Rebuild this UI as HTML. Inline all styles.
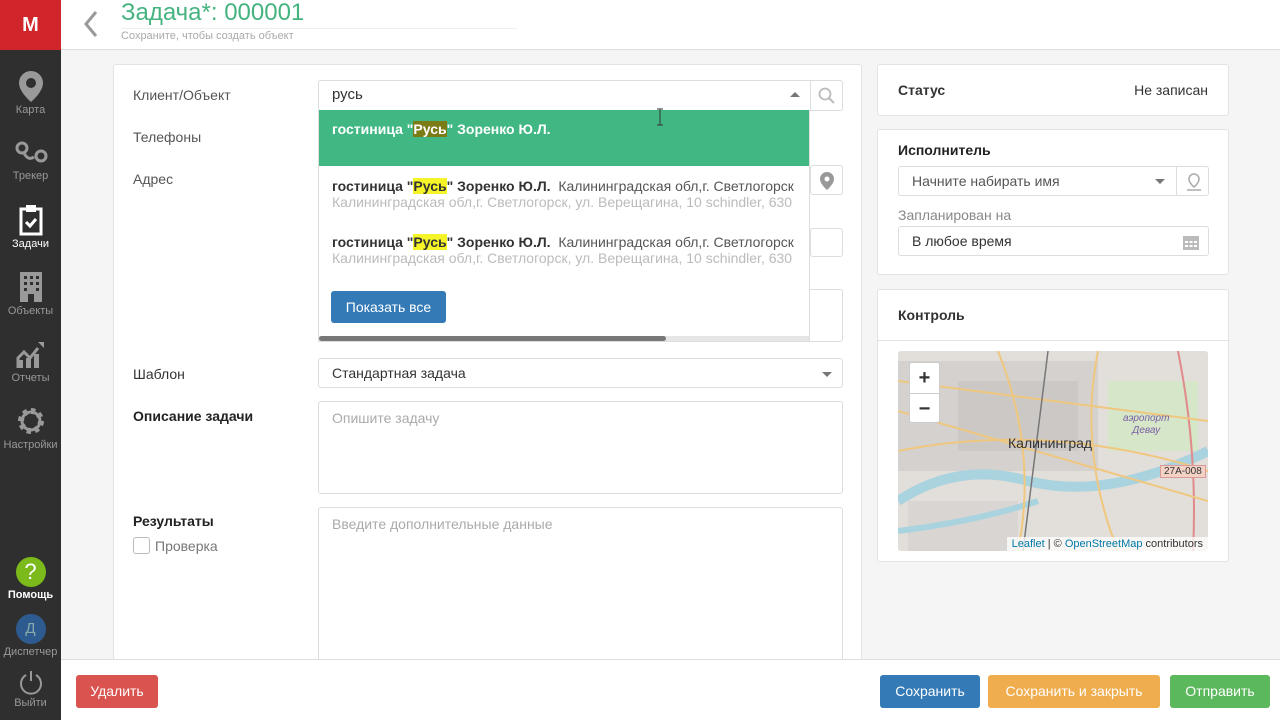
<!DOCTYPE html>
<html><head><meta charset="utf-8"><style>
*{box-sizing:border-box;margin:0;padding:0}
body{width:1280px;height:720px;overflow:hidden;background:#f5f5f5;font-family:"Liberation Sans","Noto Sans CJK SC",sans-serif;font-size:14px;color:#333;position:relative}
.side{position:absolute;left:0;top:0;width:61px;height:720px;background:#2f2f2f}
.logo{height:50px;background:#d0252b;color:#fff;font-weight:bold;font-size:20px;text-align:center;line-height:50px}
.ni{position:absolute;left:0;width:61px;text-align:center;color:#999;font-size:11px}
.ni svg{display:block;margin:0 auto 2px}
.top{position:absolute;left:61px;top:0;right:0;height:50px;background:#fff;border-bottom:1px solid #ddd}
.abs{position:absolute}
.card{position:absolute;background:#fff;border:1px solid #e3e3e3;border-radius:3px}
.inp{position:absolute;background:#fff;border:1px solid #ddd;border-radius:3px}
.lbl{position:absolute;left:133px;font-size:14px;color:#555}
.ph{color:#aaa}
.btn{position:absolute;color:#fff;border-radius:3px;font-size:14px;text-align:center;line-height:32px;height:32px}
.hl{background:#f4f428;color:#333}
</style></head><body>
<div class="side">
<div class="logo">M</div>
<div class="ni" style="top:70px"><svg width="26" height="32" viewBox="0 0 26 32"><path d="M13 1a12 12 0 0 0-12 12c0 9 12 19 12 19s12-10 12-19A12 12 0 0 0 13 1z" fill="#999"/><circle cx="13" cy="13" r="5" fill="#2f2f2f"/></svg>Карта</div>
<div class="ni" style="top:140px"><svg width="34" height="28" viewBox="0 0 34 28"><circle cx="8" cy="8" r="5" fill="none" stroke="#999" stroke-width="3"/><circle cx="27" cy="16" r="5" fill="none" stroke="#999" stroke-width="3"/><path d="M10 13q4 8 10 4" stroke="#999" stroke-width="3" fill="none"/></svg>Трекер</div>
<div class="ni" style="top:204px;color:#fff"><svg width="24" height="32" viewBox="0 0 24 32"><rect x="2" y="5" width="20" height="25" fill="none" stroke="#fff" stroke-width="3"/><rect x="7" y="1" width="10" height="7" fill="#fff"/><path d="M7 18l4 4 6-7" stroke="#fff" stroke-width="3" fill="none"/></svg>Задачи</div>
<div class="ni" style="top:271px"><svg width="24" height="32" viewBox="0 0 24 32"><rect x="1" y="1" width="22" height="30" fill="#999"/><g fill="#2f2f2f"><rect x="5" y="5" width="3" height="3"/><rect x="11" y="5" width="3" height="3"/><rect x="17" y="5" width="3" height="3"/><rect x="5" y="11" width="3" height="3"/><rect x="11" y="11" width="3" height="3"/><rect x="17" y="11" width="3" height="3"/><rect x="5" y="17" width="3" height="3"/><rect x="17" y="17" width="3" height="3"/><rect x="9" y="23" width="6" height="8"/></g></svg>Объекты</div>
<div class="ni" style="top:338px"><svg width="30" height="32" viewBox="0 0 30 32"><path d="M2 30V20l6-6 6 6 8-10" stroke="#999" stroke-width="3" fill="none"/><path d="M22 4h6v6z" fill="#999"/><rect x="2" y="22" width="5" height="8" fill="#999"/><rect x="10" y="20" width="5" height="10" fill="#999"/><rect x="18" y="16" width="5" height="14" fill="#999"/></svg>Отчеты</div>
<div class="ni" style="top:405px"><svg width="30" height="32" viewBox="0 0 30 32"><circle cx="15" cy="16" r="10" fill="none" stroke="#999" stroke-width="6" stroke-dasharray="4 3.8"/><circle cx="15" cy="16" r="9" fill="none" stroke="#999" stroke-width="3"/></svg>Настройки</div>
<div class="ni" style="top:557px;color:#fff;font-weight:bold"><div style="width:30px;height:30px;border-radius:50%;background:#7cba1c;margin:0 auto 2px;color:#fff;font-size:22px;line-height:30px;font-weight:normal">?</div>Помощь</div>
<div class="ni" style="top:614px"><div style="width:30px;height:30px;border-radius:50%;background:#2d5b8f;margin:0 auto 2px;color:#8aa;font-size:15px;line-height:30px">Д</div>Диспетчер</div>
<div class="ni" style="top:669px"><svg width="26" height="26" viewBox="0 0 26 26"><path d="M8 6a10 10 0 1 0 10 0" stroke="#999" stroke-width="2" fill="none"/><path d="M13 2v10" stroke="#999" stroke-width="2"/></svg>Выйти</div>
</div>
<div class="top">
<svg class="abs" style="left:22px;top:10px" width="16" height="28" viewBox="0 0 16 28"><path d="M13 2L3 14l10 12" stroke="#999" stroke-width="3" fill="none"/></svg>
<div class="abs" style="left:60px;top:-1px;font-size:24px;color:#45b37f">Задача*: 000001</div>
<div class="abs" style="left:60px;top:28px;width:396px;border-top:1px solid #eee"></div>
<div class="abs" style="left:60px;top:30px;font-size:11px;color:#aaa">Сохраните, чтобы создать объект</div>
</div>
<div class="card" style="left:113px;top:64px;width:749px;height:620px"></div>
<div class="lbl" style="top:87px">Клиент/Объект</div>
<div class="lbl" style="top:129px">Телефоны</div>
<div class="lbl" style="top:171px">Адрес</div>
<div class="lbl" style="top:366px;color:#333">Шаблон</div>
<div class="lbl" style="top:408px;font-weight:bold;color:#222">Описание задачи</div>
<div class="lbl" style="top:513px;font-weight:bold;color:#222">Результаты</div>
<div class="abs" style="left:133px;top:537px;width:17px;height:17px;border:1px solid #bbb;border-radius:3px;background:#fff"></div>
<div class="lbl" style="left:155px;top:538px;color:#777">Проверка</div>
<div class="inp" style="left:810px;top:165px;width:33px;height:30px"><svg class="abs" style="left:9px;top:6px" width="14" height="18" viewBox="0 0 14 18"><path d="M7 0a7 7 0 0 0-7 7c0 5 7 11 7 11s7-6 7-11A7 7 0 0 0 7 0z" fill="#999"/><circle cx="7" cy="7" r="2.5" fill="#fff"/></svg></div>
<div class="inp" style="left:810px;top:228px;width:33px;height:29px"></div>
<div class="inp" style="left:318px;top:289px;width:525px;height:53px"></div>
<div class="inp" style="left:318px;top:80px;width:525px;height:31px"></div>
<div class="abs" style="left:810px;top:80px;width:1px;height:31px;background:#ddd"></div>
<div class="abs" style="left:332px;top:86px;font-size:15px">русь</div>
<div class="abs" style="left:790px;top:92px;border:5px solid transparent;border-bottom:5px solid #777;border-top:0"></div>
<svg class="abs" style="left:818px;top:87px" width="18" height="18" viewBox="0 0 18 18"><circle cx="7" cy="7" r="5.5" stroke="#bbb" stroke-width="1.8" fill="none"/><path d="M11 11l5 5" stroke="#bbb" stroke-width="2"/></svg>
<div class="abs" style="left:318px;top:110px;width:492px;height:232px;background:#fff;border:1px solid #ddd;border-top:0;overflow:hidden;white-space:nowrap">
<div style="height:56px;background:#41b883;color:#fff;font-weight:bold;padding:11px 13px">гостиница "<span style="background:#7c7c17">Русь</span>" Зоренко Ю.Л.</div>
<div style="padding:12px 13px 0;height:56px;line-height:16px"><b>гостиница "<span class="hl">Русь</span>" Зоренко Ю.Л.</b>&nbsp; <span style="color:#555">Калининградская обл,г. Светлогорск</span><br><span style="color:#bbb">Калининградская обл,г. Светлогорск, ул. Верещагина, 10 schindler, 630</span></div>
<div style="padding:12px 13px 0;height:56px;line-height:16px"><b>гостиница "<span class="hl">Русь</span>" Зоренко Ю.Л.</b>&nbsp; <span style="color:#555">Калининградская обл,г. Светлогорск</span><br><span style="color:#bbb">Калининградская обл,г. Светлогорск, ул. Верещагина, 10 schindler, 630</span></div>
<div class="btn" style="left:12px;top:181px;width:115px;background:#337ab7;font-size:14px">Показать все</div>
<div class="abs" style="left:0;top:226px;width:492px;height:5px;background:#e6e6e6"></div>
<div class="abs" style="left:0;top:226px;width:347px;height:5px;background:#777;border-radius:3px"></div>
</div>
<svg class="abs" style="left:655px;top:108px" width="10" height="18"><path d="M2 1h6M5 1v16M2 17h6" stroke="#333"/></svg>
<div class="inp" style="left:318px;top:358px;width:525px;height:30px"><span class="abs" style="left:13px;top:6px">Стандартная задача</span><span class="abs" style="left:503px;top:13px;border:5px solid transparent;border-top:5px solid #777;border-bottom:0"></span></div>
<div class="inp" style="left:318px;top:401px;width:525px;height:93px"><span class="abs ph" style="left:13px;top:8px">Опишите задачу</span></div>
<div class="inp" style="left:318px;top:507px;width:525px;height:160px"><span class="abs ph" style="left:13px;top:8px">Введите дополнительные данные</span></div>

<div class="card" style="left:877px;top:64px;width:352px;height:52px"><span class="abs" style="left:20px;top:17px;font-weight:bold">Статус</span><span class="abs" style="right:20px;top:17px">Не записан</span></div>
<div class="card" style="left:877px;top:129px;width:352px;height:146px">
<span class="abs" style="left:20px;top:12px;font-weight:bold;color:#222">Исполнитель</span>
<div class="inp" style="left:20px;top:36px;width:311px;height:30px"><span class="abs" style="left:13px;top:6px;color:#555">Начните набирать имя</span><span class="abs" style="left:256px;top:12px;border:5px solid transparent;border-top:5px solid #777;border-bottom:0"></span><span class="abs" style="left:277px;top:0;width:1px;height:28px;background:#ddd"></span><svg class="abs" style="left:287px;top:6px" width="16" height="18" viewBox="0 0 16 18"><path d="M8 1a5 5 0 0 0-5 5c0 4 5 8 5 8s5-4 5-8a5 5 0 0 0-5-5z" fill="none" stroke="#aaa" stroke-width="1.5"/><path d="M1 17h14" stroke="#aaa" stroke-width="1.5"/></svg></div>
<span class="abs" style="left:20px;top:77px;color:#888">Запланирован на</span>
<div class="inp" style="left:20px;top:96px;width:311px;height:30px"><span class="abs" style="left:13px;top:6px">В любое время</span><svg class="abs" style="left:283px;top:6px" width="18" height="18" viewBox="0 0 18 18"><rect x="1" y="3" width="16" height="14" fill="#bbb"/><g fill="#fff"><rect x="3" y="8" width="3" height="2"/><rect x="7.5" y="8" width="3" height="2"/><rect x="12" y="8" width="3" height="2"/><rect x="3" y="12" width="3" height="2"/><rect x="7.5" y="12" width="3" height="2"/><rect x="12" y="12" width="3" height="2"/></g></svg></div>
</div>
<div class="card" style="left:877px;top:289px;width:352px;height:273px">
<span class="abs" style="left:20px;top:17px;font-weight:bold">Контроль</span>
<div class="abs" style="left:0;top:50px;width:350px;border-top:1px solid #e3e3e3"></div>
<div class="abs" style="left:20px;top:61px;width:310px;height:200px;background:#e8e4df;border-radius:3px;overflow:hidden">
<svg width="310" height="200" viewBox="0 0 310 200">
<rect width="310" height="200" fill="#e2ded9"/>
<rect x="0" y="10" width="200" height="110" fill="#d4d1ce"/>
<rect x="60" y="30" width="120" height="70" fill="#cbc8c6"/>
<rect x="10" y="150" width="110" height="50" fill="#d8d5d2"/>
<rect x="210" y="30" width="90" height="70" fill="#d6e6c8"/>
<path d="M0 150q60-40 130-20 80 20 180-30" stroke="#a9d3df" stroke-width="10" fill="none"/>
<path d="M0 180q80-10 140-30" stroke="#a9d3df" stroke-width="6" fill="none"/>
<path d="M0 100 Q150 70 310 120" stroke="#f0c77e" stroke-width="2" fill="none"/>
<path d="M100 0 Q140 100 120 200" stroke="#f0c77e" stroke-width="2" fill="none"/>
<path d="M200 0 Q180 100 220 200" stroke="#f0c77e" stroke-width="2" fill="none"/>
<path d="M280 0 Q300 100 295 200" stroke="#e08a8a" stroke-width="2" fill="none"/>
<path d="M0 60 L310 150" stroke="#f0c77e" stroke-width="2"/>
<path d="M0 30 L310 70" stroke="#f0c77e" stroke-width="2"/>
<path d="M150 0 L125 200" stroke="#777" stroke-width="1.5"/>
</svg>
<span class="abs" style="left:110px;top:84px;font-size:14px;color:#333">Калининград</span>
<span class="abs" style="left:225px;top:62px;font-size:10px;font-style:italic;color:#7a5ea5;text-align:center;line-height:12px">аэропорт<br>Девау</span>
<span class="abs" style="left:262px;top:114px;font-size:10px;background:#f3d2c6;border:1px solid #d99;padding:0 3px">27A-008</span>
<div class="abs" style="left:11px;top:11px;width:31px;height:61px;background:#fff;border:1px solid #ccc;border-radius:3px;font-size:20px;font-weight:bold;text-align:center;line-height:30px">+<div style="border-top:1px solid #ccc">−</div></div>
<div class="abs" style="right:0;bottom:0;background:rgba(255,255,255,.75);font-size:11px;padding:1px 5px">
<span style="color:#0078a8">Leaflet</span> | © <span style="color:#0078a8">OpenStreetMap</span> contributors</div>
</div>
</div>

<div class="abs" style="left:61px;top:659px;width:1219px;height:61px;background:#fff;border-top:1px solid #ddd"></div>
<div class="btn" style="left:76px;top:675px;width:82px;background:#d9534f;line-height:33px;height:33px">Удалить</div>
<div class="btn" style="left:880px;top:675px;width:100px;background:#337ab7;line-height:33px;height:33px">Сохранить</div>
<div class="btn" style="left:988px;top:675px;width:172px;background:#f0ad4e;line-height:33px;height:33px">Сохранить и закрыть</div>
<div class="btn" style="left:1170px;top:675px;width:100px;background:#5cb85c;line-height:33px;height:33px">Отправить</div>
</body></html>
